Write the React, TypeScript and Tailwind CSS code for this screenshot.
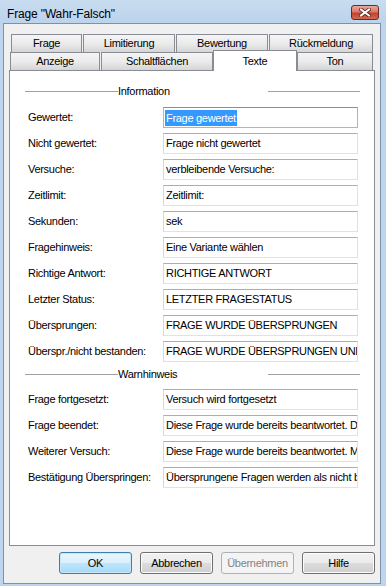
import React from "react";

const infoRows: [string, string][] = [
    ["Gewertet:", "Frage gewertet"],
    ["Nicht gewertet:", "Frage nicht gewertet"],
    ["Versuche:", "verbleibende Versuche:"],
    ["Zeitlimit:", "Zeitlimit:"],
    ["Sekunden:", "sek"],
    ["Fragehinweis:", "Eine Variante wählen"],
    ["Richtige Antwort:", "RICHTIGE ANTWORT"],
    ["Letzter Status:", "LETZTER FRAGESTATUS"],
    ["Übersprungen:", "FRAGE WURDE ÜBERSPRUNGEN"],
    ["Überspr./nicht bestanden:", "FRAGE WURDE ÜBERSPRUNGEN UND NICHT BESTANDEN"],
];

const warnRows: [string, string][] = [
    ["Frage fortgesetzt:", "Versuch wird fortgesetzt"],
    ["Frage beendet:", "Diese Frage wurde bereits beantwortet. Die Antwort kann nicht geändert werden."],
    ["Weiterer Versuch:", "Diese Frage wurde bereits beantwortet. Möchten Sie es erneut versuchen?"],
    ["Bestätigung Überspringen:", "Übersprungene Fragen werden als nicht beantwortet gewertet."],
];

const tabBase =
    "h-[18px] flex items-center justify-center border border-b-0 border-[#898c95] bg-linear-to-b from-[#f4f4f4] via-[#ebebeb] to-[#d5d5d5] text-black";

function GroupHeader({ title, className }: { title: string; className?: string }) {
    return (
        <div className={`flex items-center h-[14px] ml-[15px] ${className ?? ""}`}>
            <div className="w-[93px] h-px bg-[#a0a0a0]" />
            <span className="w-[150px] leading-[14px]">{title}</span>
            <div className="w-[92px] h-px bg-[#a0a0a0]" />
        </div>
    );
}

function Row({ label, value, focused }: { label: string; value: string; focused?: boolean }) {
    return (
        <div className="flex items-center h-[21px] pl-[18px]">
            <span className="w-[135px] whitespace-nowrap">{label}</span>
            <div
                className={`w-[195px] h-[21px] bg-white flex items-center overflow-hidden whitespace-nowrap pl-[1px] border ${
                    focused
                        ? "border-[#8fbde8] border-t-[#5a9ad8]"
                        : "border-[#dfe2e8] border-t-[#abadb3] border-l-[#d5d8de]"
                }`}
            >
                {focused ? (
                    <span className="bg-[#3399ff] text-white px-[1px] leading-[16px]">{value}</span>
                ) : (
                    <span className="px-[1px]">{value}</span>
                )}
            </div>
        </div>
    );
}

function DlgButton({ label, variant }: { label: string; variant?: "default" | "disabled" }) {
    const cls =
        variant === "default"
            ? "border-[#3c7fb1] bg-[linear-gradient(to_bottom,#eaf6fd_0%,#d9f0fc_50%,#bee6fd_50%,#a7d9f5_100%)] text-black shadow-[inset_0_0_0_1px_#c7e6f8]"
            : variant === "disabled"
            ? "border-[#adb2b5] bg-[#f4f4f4] text-[#838383]"
            : "border-[#707070] bg-[linear-gradient(to_bottom,#f2f2f2_0%,#ebebeb_50%,#dddddd_50%,#cfcfcf_100%)] text-black shadow-[inset_0_0_0_1px_#fcfcfc]";
    return (
        <div className={`w-[73px] h-[22px] rounded-[3px] border flex items-center justify-center ${cls}`}>
            {label}
        </div>
    );
}

export default function App() {
    return (
        <div className="w-[386px] h-[586px] bg-[#bed5ed] flex flex-col font-['Liberation_Sans',Arial,sans-serif] text-[11px] tracking-[-0.3px] text-black select-none">
            {/* title bar */}
            <div className="h-[23px] flex justify-between pl-[7px] pr-[7px] bg-linear-to-b from-[#c9dcf0] to-[#bcd3ec]">
                <span className="pt-[6px] text-[12px] leading-[16px] tracking-[-0.15px]">Frage "Wahr-Falsch"</span>
                <div className="mt-[5px] w-[28px] h-[15px] rounded-[3px] border border-[#6b2a25] bg-[linear-gradient(to_bottom,#e8a99c_0%,#d67a6a_45%,#c4422f_55%,#d06a50_100%)] flex items-center justify-center">
                    <svg width="12" height="9" viewBox="0 0 12 9">
                        <path d="M2 1.5 L10 7.5 M10 1.5 L2 7.5" stroke="#5a1f1a" strokeWidth="3.6" strokeLinecap="square" />
                        <path d="M2 1.5 L10 7.5 M10 1.5 L2 7.5" stroke="#ffffff" strokeWidth="2" strokeLinecap="square" />
                    </svg>
                </div>
            </div>

            {/* client area */}
            <div className="ml-[3px] mr-[5px] mb-[2px] flex-1 border border-[#7f90a8] bg-[#f0f0f0] flex flex-col">
                {/* tabs back row */}
                <div className="mt-[10px] ml-[7px] flex gap-[1px]">
                    <div className={`${tabBase} w-[71px]`}>Frage</div>
                    <div className={`${tabBase} w-[92px]`}>Limitierung</div>
                    <div className={`${tabBase} w-[92px]`}>Bewertung</div>
                    <div className={`${tabBase} w-[104px]`}>Rückmeldung</div>
                </div>
                {/* tabs front row */}
                <div className="ml-[6px] flex h-[18px]">
                    <div className={`${tabBase} w-[90px] mr-[1px]`}>Anzeige</div>
                    <div className={`${tabBase} w-[112px]`}>Schaltflächen</div>
                    <div className="relative z-10 -mt-[2px] w-[84px] h-[21px] border border-b-0 border-[#898c95] bg-white flex items-start justify-center pt-[2px]">
                        Texte
                    </div>
                    <div className={`${tabBase} w-[76px]`}>Ton</div>
                </div>

                {/* panel */}
                <div className="ml-[5px] w-[366px] h-[476px] border border-[#898c95] bg-white flex flex-col">
                    <GroupHeader title="Information" className="mt-[13px] mb-[9px]" />
                    <div className="flex flex-col gap-[5px]">
                        {infoRows.map(([l, v], i) => (
                            <Row key={l} label={l} value={v} focused={i === 0} />
                        ))}
                    </div>
                    <GroupHeader title="Warnhinweis" className="mt-[5px] mb-[8px]" />
                    <div className="flex flex-col gap-[5px]">
                        {warnRows.map(([l, v]) => (
                            <Row key={l} label={l} value={v} />
                        ))}
                    </div>
                </div>

                {/* buttons */}
                <div className="ml-[5px] w-[366px] mt-[6px] flex justify-end gap-[8px]">
                    <DlgButton label="OK" variant="default" />
                    <DlgButton label="Abbrechen" />
                    <DlgButton label="Übernehmen" variant="disabled" />
                    <DlgButton label="Hilfe" />
                </div>
            </div>
        </div>
    );
}
